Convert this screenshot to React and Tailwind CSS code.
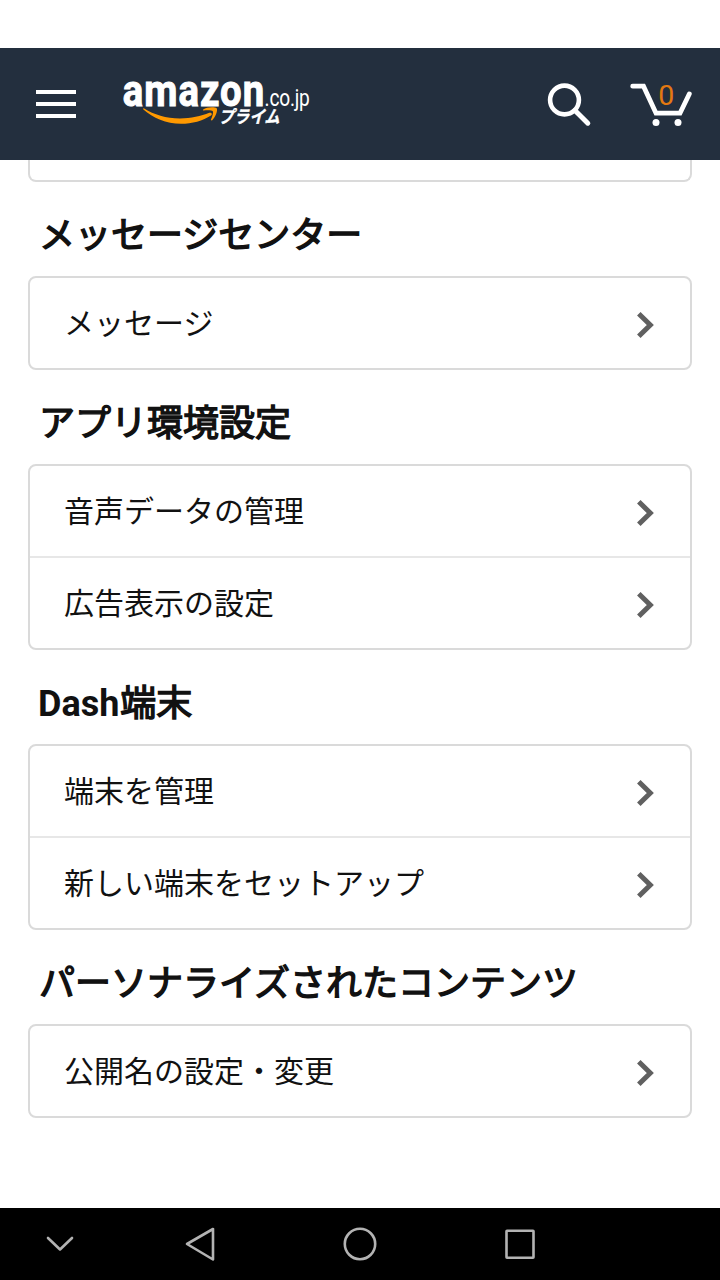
const sections = [
  { title: "メッセージセンター", items: ["メッセージ"] },
  { title: "アプリ環境設定", items: ["音声データの管理", "広告表示の設定"] },
  { latin: "Dash", title: "端末", items: ["端末を管理", "新しい端末をセットアップ"] },
  { title: "パーソナライズされたコンテンツ", items: ["公開名の設定・変更"] }
];

function Logo() {
  return (
    <svg width="200" height="88" viewBox="120 60 200 88" fill="#fff" role="img" aria-label="amazon.co.jp">
      <text
        transform="translate(122.8 105.7) scale(0.87 1)"
        textLength="162.5"
        fontSize="44"
        stroke="#fff"
        strokeWidth="1"
        className="font-[Roboto,sans-serif] font-bold"
      >
        amazon
      </text>
      <text
        transform="translate(264.6 106) scale(0.78 1)"
        textLength="58"
        fontSize="24.5"
        className="font-[Roboto,sans-serif]"
      >
        .co.jp
      </text>
      <path
        d="M144.2 108.4C154 114.5 166 118.4 180 118.4C191 118.4 201 116.2 209.3 112.8C211.3 112 212.8 114.2 211 115.4C203 120.6 192 123.8 181 123.8C166 123.8 153 118 143.4 109.5C142.8 108.8 143.4 108 144.2 108.4Z"
        fill="#ff9900"
      />
      <path
        d="M203.2 109.5C206.5 107 214.5 106.5 216.7 108.3C218 110.5 215.5 117.5 212 120.4C211.2 120.8 210.7 120.3 211 119.6C212 117.2 213.7 112.6 212.8 111.3C211.8 110 206.4 110.3 203.8 110.6C203 110.7 202.6 110 203.2 109.5Z"
        fill="#ff9900"
      />
      <text
        transform="translate(218.5 123) skewX(-14)"
        textLength="61"
        lengthAdjust="spacingAndGlyphs"
        fontSize="17.5"
        stroke="#fff"
        strokeWidth="0.4"
        className="font-['Noto_Sans_CJK_JP',sans-serif] font-bold"
      >
        プライム
      </text>
    </svg>
  );
}

function Header() {
  return (
    <header className="flex h-28 shrink-0 items-center bg-[#232f3e]">
      <button className="ml-9 flex w-10 flex-col gap-2" aria-label="menu">
        <span className="h-1 w-full bg-white" />
        <span className="h-1 w-full bg-white" />
        <span className="h-1 w-full bg-white" />
      </button>
      <div className="ml-11">
        <Logo />
      </div>
      <svg className="ml-[224px]" width="48" height="48" viewBox="544 80 48 48" fill="none" stroke="#fff">
        <circle cx="564.5" cy="100" r="14.4" strokeWidth="4.6" />
        <path d="M575 110.5L587.8 123.2" strokeWidth="5" strokeLinecap="round" />
      </svg>
      <svg className="ml-9" width="68" height="48" viewBox="628 80 68 48">
        <path
          d="M632.7 86.2H643.5L656 113.2H680L689.3 94"
          fill="none"
          stroke="#fff"
          strokeWidth="4.8"
          strokeLinecap="round"
        />
        <circle cx="656" cy="122.5" r="3.5" fill="#fff" />
        <circle cx="678" cy="122.5" r="3.5" fill="#fff" />
        <text x="658.3" y="104.5" fontSize="28.5" fill="#e47911" className="font-[Roboto,sans-serif]">
          0
        </text>
      </svg>
    </header>
  );
}

function Section({ latin, title, items }) {
  return (
    <section>
      <h2 className="flex h-[94px] items-center pt-3.5 pl-[38px] text-4xl">
        {latin && <span className="font-bold">{latin}</span>}
        <span className="pl-px [-webkit-text-stroke:1.4px_#111]">{title}</span>
      </h2>
      <ul className="mx-7 divide-y-2 divide-[#e7e7e7] rounded-lg border-2 border-[#dadada]">
        {items.map((item) => (
          <li
            key={item}
            className="flex h-[92px] items-center justify-between pr-9 pl-[34px] text-[30px] last:h-[90px]"
          >
            <span>{item}</span>
            <Chevron />
          </li>
        ))}
      </ul>
    </section>
  );
}

function Chevron() {
  return (
    <svg className="mt-1" width="18" height="28" viewBox="636 311 18 28" fill="none" stroke="#606060" strokeWidth="5">
      <path d="M638.8 313.8L650.3 325L638.8 336.2" />
    </svg>
  );
}

function NavBar() {
  return (
    <nav className="flex h-[72px] shrink-0 items-center bg-black">
      <svg width="720" height="72" fill="none" stroke="#b3b3b3" strokeWidth="2.6" strokeLinecap="round" strokeLinejoin="round">
        <path d="M48 30L60 41.5L72 30" />
        <path d="M213 21V51.5L187 36Z" />
        <circle cx="360" cy="36" r="15.2" />
        <rect x="506.5" y="22.7" width="27" height="27" rx="0.5" />
      </svg>
    </nav>
  );
}

function App() {
  return (
    <div className="flex h-[1280px] w-[720px] flex-col overflow-hidden bg-white pt-12 font-[Roboto,'Noto_Sans_CJK_JP',sans-serif] text-[#111]">
      <Header />
      <main className="flex-1">
        <div className="mx-7 h-[22px] rounded-b-lg border-2 border-t-0 border-[#dadada]" />
        {sections.map((section) => (
          <Section key={section.title} latin={section.latin} title={section.title} items={section.items} />
        ))}
      </main>
      <NavBar />
    </div>
  );
}

export default App;
